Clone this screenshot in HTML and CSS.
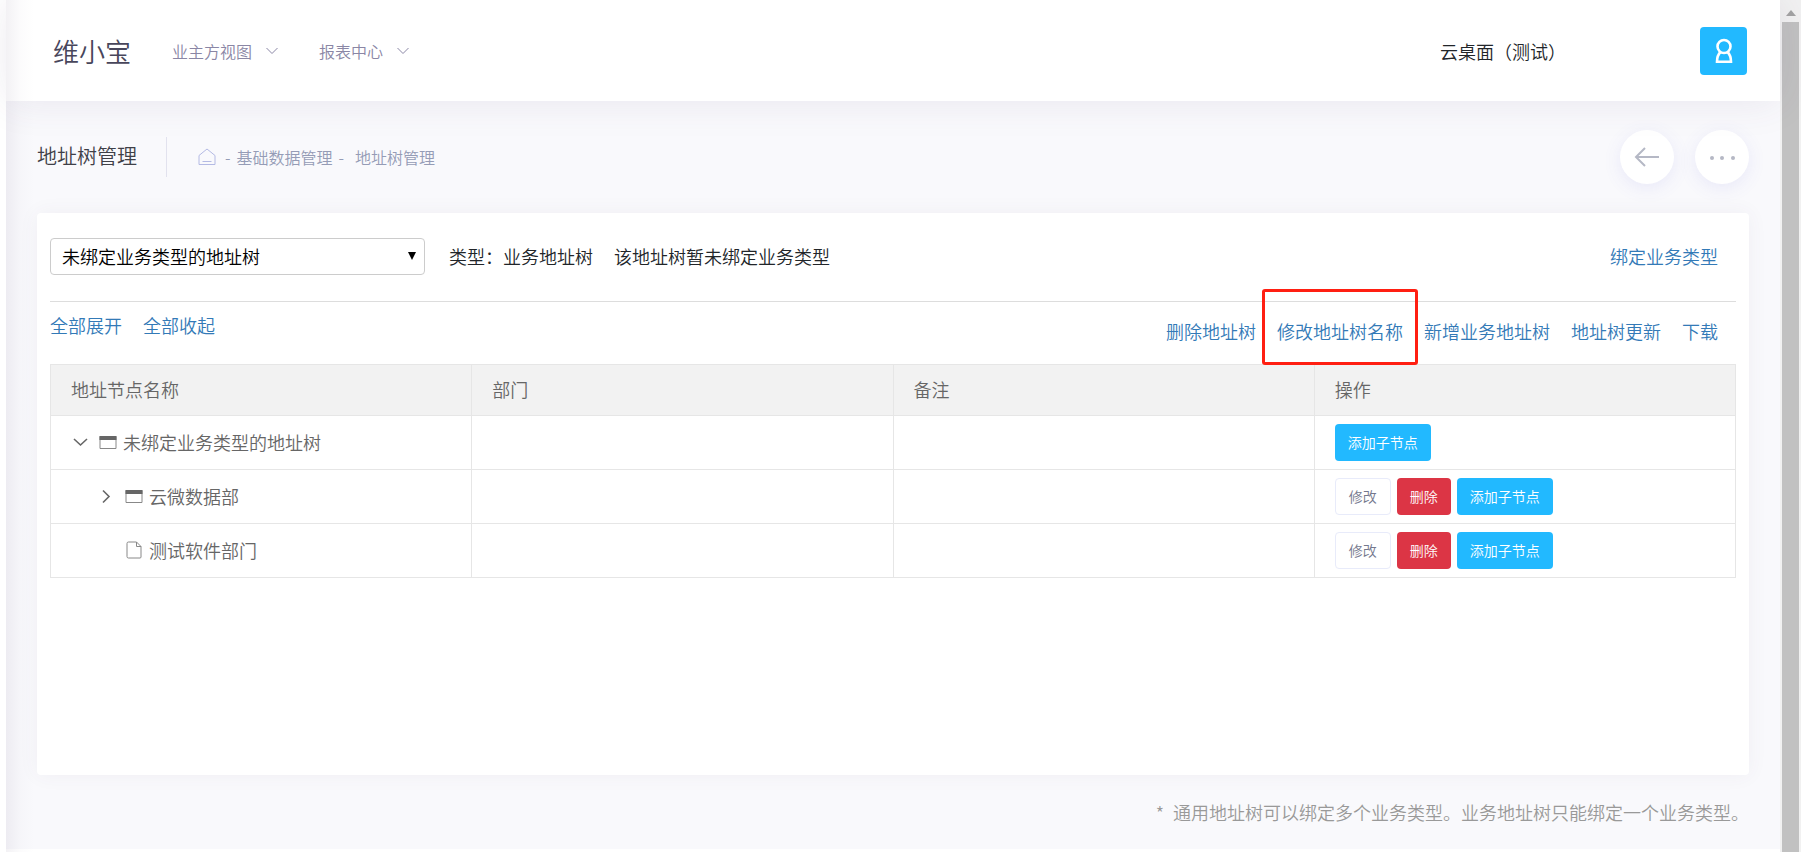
FILE: index.html
```html
<!DOCTYPE html>
<html lang="zh-CN">
<head>
<meta charset="utf-8">
<title>地址树管理</title>
<link rel="stylesheet" href="styles.css">
</head>
<body>
<div class="window">
  <div class="shell">
    <header class="topbar">
      <span class="brand">维小宝</span>
      <nav class="menu">
        <button type="button" class="menu-item">业主方视图
          <svg class="caret" viewBox="0 0 12 8"><path d="M.5 1 6 6.500 11.500 1"/></svg>
        </button>
        <button type="button" class="menu-item">报表中心
          <svg class="caret" viewBox="0 0 12 8"><path d="M.5 1 6 6.500 11.500 1"/></svg>
        </button>
      </nav>
      <span class="tenant">云桌面（测试）</span>
      <button type="button" class="avatar" aria-label="用户">
        <svg viewBox="0 0 20 26"><circle cx="10" cy="8.500" r="6.500"/><path d="M6.500 14C4 16.500 3 19.500 3 23.700h14c0-4.200-1-7.200-3.500-9.700"/></svg>
      </button>
    </header>
    <main class="content">
      <div class="subheader">
        <h1 class="title">地址树管理</h1>
        <nav class="crumbs">
          <a href="#" aria-label="首页"><svg class="home" viewBox="0 0 18 18"><path d="M1 16.500V7.500L9 1l8 6.500v9zM4.500 13.500h9"/></svg></a>
          <span>-</span><a href="#">基础数据管理</a><span>-</span><a href="#" class="crumb-last">地址树管理</a>
        </nav>
        <div class="round-tools">
          <button type="button" class="round" aria-label="返回"><svg viewBox="0 0 26 20"><path d="M25 10H2M11 1 2 10l9 9"/></svg></button>
          <button type="button" class="round" aria-label="更多"><svg class="dots" viewBox="0 0 26 20"><circle cx="3" cy="11" r="2"/><circle cx="13" cy="11" r="2"/><circle cx="24" cy="11" r="2"/></svg></button>
        </div>
      </div>
      <section class="card">
        <div class="filter">
          <div class="select-wrap">
            <select class="select" aria-label="地址树"><option>未绑定业务类型的地址树</option></select>
            <svg class="select-arrow" viewBox="0 0 8 8"><path d="M0 0h8L4 8z"/></svg>
          </div>
          <div class="info"><span>类型：业务地址树</span><span>该地址树暂未绑定业务类型</span></div>
          <a href="#" class="link bind">绑定业务类型</a>
        </div>
        <div class="actions">
          <div class="expand"><a href="#" class="link">全部展开</a><a href="#" class="link">全部收起</a></div>
          <div class="tree-links">
            <a href="#" class="link">删除地址树</a>
            <a href="#" class="link marked">修改地址树名称</a>
            <a href="#" class="link">新增业务地址树</a>
            <a href="#" class="link">地址树更新</a>
            <a href="#" class="link">下载</a>
          </div>
        </div>
        <table class="tree">
          <thead><tr><th>地址节点名称</th><th>部门</th><th>备注</th><th>操作</th></tr></thead>
          <tbody>
            <tr>
              <td><div class="node">
                <svg class="toggle" viewBox="0 0 16 16"><path d="M2 5l6.500 6L15 5"/></svg>
                <svg class="glyph" viewBox="0 0 18 18"><path class="line" d="M1 3.500h16v12H1z"/><path class="fill" d="M.5 3h17v4H.5z"/></svg>
                未绑定业务类型的地址树</div></td>
              <td></td><td></td>
              <td><div class="buttons"><button type="button" class="btn primary">添加子节点</button></div></td>
            </tr>
            <tr>
              <td><div class="node child">
                <svg class="toggle" viewBox="0 0 16 16"><path d="M5 2.500 11 8.500l-6 6"/></svg>
                <svg class="glyph" viewBox="0 0 18 18"><path class="line" d="M1 3.500h16v12H1z"/><path class="fill" d="M.5 3h17v4H.5z"/></svg>
                云微数据部</div></td>
              <td></td><td></td>
              <td><div class="buttons"><button type="button" class="btn plain">修改</button><button type="button" class="btn danger">删除</button><button type="button" class="btn primary">添加子节点</button></div></td>
            </tr>
            <tr>
              <td><div class="node child">
                <span class="toggle"></span>
                <svg class="glyph" viewBox="0 0 18 18"><path class="line" d="M3.500 1h8l4.500 4.500v10.500a1 1 0 0 1-1 1h-11.500a1.500 1.500 0 0 1-1.500-1.500v-13A1.500 1.500 0 0 1 3.500 1zM11.500 1v4.500h4.500"/></svg>
                测试软件部门</div></td>
              <td></td><td></td>
              <td><div class="buttons"><button type="button" class="btn plain">修改</button><button type="button" class="btn danger">删除</button><button type="button" class="btn primary">添加子节点</button></div></td>
            </tr>
          </tbody>
        </table>
      </section>
      <p class="note"><span>*</span>通用地址树可以绑定多个业务类型。业务地址树只能绑定一个业务类型。</p>
    </main>
  </div>
  <div class="scrollbar" aria-hidden="true">
    <svg class="scroll-up" viewBox="0 0 10 6"><path d="M0 6 5 0l5 6z"/></svg>
    <div class="thumb"></div>
  </div>
</div>
</body>
</html>
```
FILE: styles.css
```css
* { box-sizing: border-box; }

body {
  margin: 0;
  background: #fff;
  color: #212529;
  font: 350 18px/24px "Noto Sans CJK SC DemiLight", "Noto Sans CJK SC", sans-serif;
}

a { color: inherit; text-decoration: none; }
button { font: inherit; cursor: pointer; }
svg { flex: none; fill: none; stroke: currentColor; }

.window { display: flex; min-height: 100vh; padding-left: 6px; }

.shell { position: relative; flex: 1; min-width: 0; padding-bottom: 3px; display: flex; flex-direction: column; }

/* soft shade cast by the collapsed side menu */
.shell::before {
  content: "";
  position: absolute;
  z-index: 2;
  inset: 0 auto 0 0;
  width: 28px;
  background: linear-gradient(90deg, rgba(82, 63, 105, .07), rgba(82, 63, 105, .02) 50%, rgba(82, 63, 105, 0));
  pointer-events: none;
}

.topbar {
  position: relative;
  z-index: 1;
  display: flex;
  align-items: center;
  height: 101px;
  padding: 0 33px 0 47px;
  background: #fff;
  box-shadow: 0 0 40px rgba(82, 63, 105, .1);
}

.brand { color: #48465b; font-size: 26px; line-height: 32px; }
.menu { display: flex; gap: 41px; margin-left: 41px; }
.menu-item {
  display: flex;
  align-items: center;
  gap: 14px;
  padding: 0;
  border: 0;
  background: none;
  color: #8a86a5;
  font-size: 16px;
}
.caret { width: 12px; height: 8px; }
.tenant { margin-left: auto; margin-right: 134px; }
.avatar {
  display: grid;
  place-items: center;
  width: 47px;
  height: 48px;
  padding: 0;
  border: 0;
  border-radius: 4px;
  background: #22b9ff;
  color: #fff;
}
.avatar svg { width: 20px; height: 26px; stroke-width: 2.6; }

.content { flex: 1; padding: 29px 31px 24px; background: #f9f9fc; }

.subheader { display: flex; align-items: center; height: 54px; }
.title {
  margin: 0;
  padding: 0 29px 2px 0;
  border-right: 1px solid #e2e2ee;
  color: #3f4047;
  font-size: 20px;
  font-weight: inherit;
  line-height: 38px;
}
.crumbs { display: flex; align-items: center; gap: 6px; margin-left: 31px; color: #959cb6; font-size: 16px; }
.crumb-last { margin-left: 5px; }
.home { display: block; width: 18px; height: 18px; margin-right: 3px; color: #b4bae4; }
.round-tools { display: flex; gap: 21px; margin-left: auto; }
.round {
  display: grid;
  place-items: center;
  width: 54px;
  height: 54px;
  padding: 0;
  border: 0;
  border-radius: 50%;
  background: #fff;
  color: #b5b8c5;
  box-shadow: 0 4px 18px rgba(93, 88, 220, .1);
}
.round svg { width: 26px; height: 20px; stroke-width: 2; }
.round .dots { fill: currentColor; stroke: none; }

.card {
  min-height: 562px;
  margin-top: 29px;
  padding: 25px 13px 0;
  border-radius: 4px;
  background: #fff;
  box-shadow: 0 0 20px rgba(82, 63, 105, .06);
}

.filter { display: flex; align-items: center; gap: 24px; padding: 0 18px 26px 0; border-bottom: 1px solid #ddd; }
.select-wrap { position: relative; width: 375px; }
.select {
  display: block;
  width: 100%;
  height: 37px;
  padding: 0 30px 2px 11px;
  border: 1px solid #ccc;
  border-radius: 4px;
  background: #fff;
  color: #000;
  font: inherit;
  appearance: none;
}
.select-arrow { position: absolute; top: 14px; right: 9px; width: 8px; height: 8px; fill: #000; stroke: none; pointer-events: none; }
.info { display: flex; gap: 21px; padding-bottom: 2px; }
.link { color: #337ab7; }
.bind { margin-left: auto; padding-bottom: 2px; }

.actions { display: flex; justify-content: space-between; padding: 11px 18px 21px 0; }
.expand { display: flex; gap: 21px; }
.tree-links { display: flex; gap: 21px; padding-top: 6px; }
.marked { position: relative; }
.marked::after {
  content: "";
  position: absolute;
  inset: -30px -15px -22px -15px;
  border: 3px solid #ff1f12;
  border-radius: 3px;
  pointer-events: none;
}

.tree { width: 100%; table-layout: fixed; border-collapse: collapse; color: #666; }
.tree th, .tree td { border: 1px solid #e6e6e6; padding: 8px 20px; text-align: left; font-weight: inherit; }
.tree th { height: 51px; padding-bottom: 10px; background: #f2f2f2; }
.tree td { height: 54px; }
.node { display: flex; align-items: center; padding-bottom: 2px; }
.child { padding-left: 26px; }
.toggle { width: 16px; height: 16px; margin: 0 11px 0 1px; stroke-width: 1.6; }
.glyph { width: 18px; height: 18px; margin-right: 6px; }
.glyph .line { stroke: #888; }
.glyph .fill { fill: #666; stroke: none; }

.buttons { display: flex; gap: 6px; }
.btn {
  height: 37px;
  padding: 0 13px 2px;
  border: 0;
  border-radius: 4px;
  font-size: 14px;
  font-weight: 400;
}
.primary { background: #22b9ff; color: #fff; }
.danger { background: #dc3545; color: #fff; }
.plain { border: 1px solid #e8ebfa; background: #fff; color: #74788d; }

.note { display: flex; justify-content: flex-end; gap: 9px; margin: 25px 0 0; color: #999; }

.scrollbar { width: 21px; padding: 10px 2px 0; background: #f1f1f1; }
.scroll-up { display: block; width: 10px; height: 6px; margin: 0 auto 6px; fill: #a3a3a3; stroke: none; }
.thumb { height: calc(100% - 12px); background: #c1c1c1; }
```
